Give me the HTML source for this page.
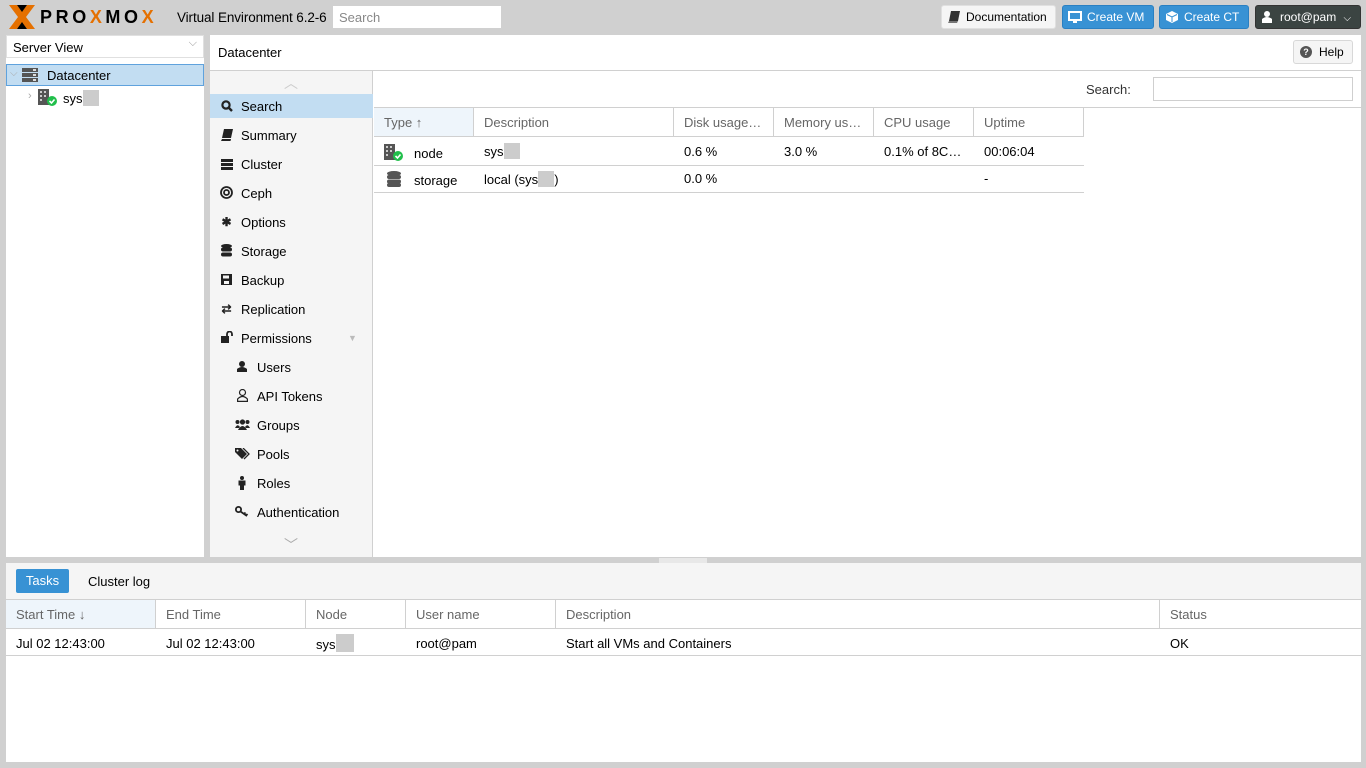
<!DOCTYPE html>
<html><head><meta charset="utf-8"><style>
*{box-sizing:border-box;margin:0;padding:0}
body{width:1366px;height:768px;background:#d0d0d0;font-family:"Liberation Sans",Arial,sans-serif;font-size:13px;color:#000;position:relative;overflow:hidden}
.a{position:absolute}
.btn{position:absolute;top:5px;height:24px;border-radius:3px;line-height:22px;font-size:12px;padding-left:24px}
.nav{position:absolute;left:210px;width:163px;height:24px;line-height:25px}
.nav span{position:absolute;left:31px}
.nav i{position:absolute;left:10px;top:0;font-style:normal;font-size:12px;width:13px;text-align:center;font-weight:bold;color:#222}
.sub span{left:47px}.sub i{left:26px}
.th{position:absolute;top:108px;height:29px;line-height:29px;padding-left:10px;color:#666;border-right:1px solid #d0d0d0;border-bottom:1px solid #d0d0d0;background:#fff}
.td{position:absolute;padding-left:10px;white-space:nowrap}
.blur{display:inline-block;width:16px;height:16px;background:#ccc;vertical-align:-3px}
</style></head><body>
<!-- top bar -->
<svg class="a" style="left:8px;top:4px" width="28" height="26" viewBox="0 0 28 26"><path d="M1 1 L9 1 L27 25 L19 25Z" fill="#e57000"/><path d="M27 1 L19 1 L1 25 L9 25Z" fill="#e57000"/><path d="M9 1 L14 8 L19 1 Z M9 25 L14 18 L19 25Z" fill="#000"/></svg>
<div class="a" style="left:40px;top:7px;font-size:18px;font-weight:bold;letter-spacing:3.6px;line-height:20px;color:#000">PRO<span style="color:#e57000">X</span>MO<span style="color:#e57000">X</span></div>
<div class="a" style="left:177px;top:10px;font-size:13.5px;letter-spacing:-0.1px">Virtual Environment 6.2-6</div>
<div class="a" style="left:333px;top:6px;width:168px;height:22px;background:#fff;color:#888;padding:4px 6px;font-size:13px">Search</div>
<div class="btn" style="left:941px;width:115px;background:#f5f5f5;border:1px solid #e0e0e0"><svg class="a" style="left:6px;top:5px" width="12" height="12"><path d="M3 0 L12 0 L10 10 L1 10Z" fill="#333"/><path d="M1 10 L10 10 L9 12 L0 12Z" fill="#777"/></svg>Documentation</div>
<div class="btn" style="left:1062px;width:92px;background:#3892d4;color:#fff;border:1px solid #2a80c2"><svg class="a" style="left:5px;top:5px" width="14" height="12"><rect x="1" y="1" width="12" height="8" fill="none" stroke="#fff" stroke-width="2"/><rect x="5" y="9" width="4" height="3" fill="#fff"/></svg>Create VM</div>
<div class="btn" style="left:1159px;width:90px;background:#3892d4;color:#fff;border:1px solid #2a80c2"><svg class="a" style="left:6px;top:5px" width="12" height="12"><path d="M6 0 L12 3 L12 9 L6 12 L0 9 L0 3Z" fill="#fff"/><path d="M6 6 L6 11 M1 3.5 L6 6 L11 3.5" stroke="#3892d4" fill="none"/></svg>Create CT</div>
<div class="btn" style="left:1255px;width:106px;background:#3b4442;color:#fff;border:1px solid #333"><svg class="a" style="left:6px;top:5px" width="10" height="12"><circle cx="5" cy="3" r="3" fill="#fff"/><path d="M0 12 L0 8 Q5 4 10 8 L10 12Z" fill="#fff"/></svg>root@pam <span style="font-size:10px;margin-left:4px">⌵</span></div>

<!-- left panel -->
<div class="a" style="left:6px;top:35px;width:198px;height:522px;background:#fff"></div>
<div class="a" style="left:6px;top:35px;width:198px;height:23px;border:1px solid #e0e0e0;padding:4px 6px">Server View<span class="a" style="right:6px;top:1px;color:#999;font-size:11px">⌵</span></div>
<div class="a" style="left:6px;top:64px;width:198px;height:22px;background:#c2ddf2;border:1px solid #5fa2dd"></div>
<div class="a" style="left:10px;top:68px;color:#aaa;font-size:10px">⌵</div>
<svg class="a" style="left:22px;top:68px" width="16" height="14"><rect x="0" y="0" width="16" height="4" fill="#555"/><rect x="0" y="5" width="16" height="4" fill="#555"/><rect x="0" y="10" width="16" height="4" fill="#555"/><rect x="11" y="1" width="3" height="2" fill="#ddd"/><rect x="11" y="6" width="3" height="2" fill="#ddd"/><rect x="11" y="11" width="3" height="2" fill="#ddd"/></svg>
<div class="a" style="left:47px;top:68px">Datacenter</div>
<div class="a" style="left:28px;top:90px;color:#aaa;font-size:11px">›</div>
<svg class="a" style="left:38px;top:89px" width="20" height="18"><rect x="0" y="0" width="11" height="16" fill="#555"/><g fill="#ccc"><rect x="2" y="2" width="2" height="2"/><rect x="6" y="2" width="2" height="2"/><rect x="2" y="6" width="2" height="2"/><rect x="6" y="6" width="2" height="2"/><rect x="2" y="10" width="2" height="2"/></g><circle cx="14" cy="12" r="5" fill="#21bf4b"/><path d="M11.5 12 L13.5 14 L16.5 10.5" stroke="#fff" stroke-width="1.6" fill="none"/></svg>
<div class="a" style="left:63px;top:90px">sys<span class="blur"></span></div>

<!-- main panel -->
<div class="a" style="left:210px;top:35px;width:1151px;height:522px;background:#fff"></div>
<div class="a" style="left:210px;top:70px;width:1151px;height:1px;background:#d0d0d0"></div>
<div class="a" style="left:218px;top:45px">Datacenter</div>
<div class="a" style="left:1293px;top:40px;width:60px;height:24px;background:#f5f5f5;border:1px solid #d8d8d8;border-radius:3px;padding:4px 0 0 25px;font-size:12px">Help<span class="a" style="left:6px;top:5px;width:12px;height:12px;border-radius:6px;background:#555;color:#fff;font-size:9px;line-height:12px;text-align:center;font-weight:bold">?</span></div>
<div class="a" style="left:210px;top:71px;width:163px;height:486px;background:#f5f5f5;border-right:1px solid #d0d0d0"></div>
<div class="a" style="left:284px;top:73px;color:#ccc;font-size:14px">︿</div>
<div class="a" style="left:284px;top:535px;color:#aaa;font-size:14px">﹀</div>
<div class="nav" style="top:94px;background:#c2ddf2"><svg class="a" style="left:11px;top:6px" width="12" height="12"><circle cx="5" cy="5" r="3.6" fill="none" stroke="#222" stroke-width="2.2"/><path d="M7.5 7.5 L11 11" stroke="#222" stroke-width="2.4"/></svg><span>Search</span></div>
<div class="nav" style="top:123px"><svg class="a" style="left:11px;top:6px" width="12" height="12"><path d="M3 0 L12 0 L10 9 L1 9Z" fill="#222"/><path d="M1 10 L10 10 L9.5 12 L0 12Z" fill="#222"/></svg><span>Summary</span></div>
<div class="nav" style="top:152px"><svg class="a" style="left:11px;top:7px" width="12" height="11"><rect y="0" width="12" height="3" fill="#222"/><rect y="4" width="12" height="3" fill="#222"/><rect y="8" width="12" height="3" fill="#222"/></svg><span>Cluster</span></div>
<div class="nav" style="top:181px"><svg class="a" style="left:10px;top:5px" width="13" height="13"><circle cx="6.5" cy="6.5" r="5.5" fill="none" stroke="#222" stroke-width="1.8"/><circle cx="6.5" cy="6.5" r="2.5" fill="none" stroke="#222" stroke-width="1.8"/></svg><span>Ceph</span></div>
<div class="nav" style="top:210px"><i>✱</i><span>Options</span></div>
<div class="nav" style="top:239px"><svg class="a" style="left:11px;top:5px" width="11" height="13"><ellipse cx="5.5" cy="2" rx="5.5" ry="2" fill="#222"/><rect y="3.5" width="11" height="4" rx="2" fill="#222"/><rect y="8.5" width="11" height="4" rx="2" fill="#222"/></svg><span>Storage</span></div>
<div class="nav" style="top:268px"><svg class="a" style="left:11px;top:6px" width="11" height="11"><rect width="11" height="11" fill="#222"/><rect x="2" y="1.5" width="6" height="3" fill="#f5f5f5"/><rect x="3" y="7" width="5" height="3" fill="#f5f5f5"/></svg><span>Backup</span></div>
<div class="nav" style="top:297px"><i>⇄</i><span>Replication</span></div>
<div class="nav" style="top:326px"><svg class="a" style="left:11px;top:5px" width="12" height="12"><rect x="0" y="5" width="8" height="7" fill="#222"/><path d="M6 5 V3 A2.5 2.5 0 0 1 11 3 V5" fill="none" stroke="#222" stroke-width="1.8"/></svg><span>Permissions</span><b class="a" style="left:138px;top:0;color:#bbb;font-size:9px;font-weight:normal">▼</b></div>
<div class="nav sub" style="top:355px"><svg class="a" style="left:27px;top:6px" width="10" height="11"><circle cx="5" cy="3" r="3" fill="#222"/><path d="M0 11 L0 8 Q5 4 10 8 L10 11Z" fill="#222"/></svg><span>Users</span></div>
<div class="nav sub" style="top:384px"><svg class="a" style="left:27px;top:5px" width="11" height="13"><circle cx="5.5" cy="3.5" r="3" fill="none" stroke="#222" stroke-width="1.2"/><path d="M0.6 12.4 V10 Q5.5 5 10.4 10 V12.4Z" fill="none" stroke="#222" stroke-width="1.2"/></svg><span>API Tokens</span></div>
<div class="nav sub" style="top:413px"><svg class="a" style="left:25px;top:6px" width="15" height="11"><circle cx="7.5" cy="3" r="2.6" fill="#222"/><circle cx="2.5" cy="3" r="2" fill="#222"/><circle cx="12.5" cy="3" r="2" fill="#222"/><path d="M3 11 Q7.5 3 12 11Z M0 9 Q2.5 4 5 8 L4 9Z M15 9 Q12.5 4 10 8 L11 9Z" fill="#222"/></svg><span>Groups</span></div>
<div class="nav sub" style="top:442px"><svg class="a" style="left:25px;top:6px" width="15" height="12"><path d="M0 0 L6 0 L12 6 L7 11 L0 4Z" fill="#222"/><path d="M8 0 L14 6 L9 11" fill="none" stroke="#222" stroke-width="1.3"/><circle cx="2.5" cy="2.5" r="1" fill="#f5f5f5"/></svg><span>Pools</span></div>
<div class="nav sub" style="top:471px"><svg class="a" style="left:28px;top:5px" width="8" height="14"><circle cx="4" cy="2" r="2" fill="#222"/><rect x="0.5" y="4.5" width="7" height="5" fill="#222"/><rect x="2" y="9" width="4" height="5" fill="#222"/></svg><span>Roles</span></div>
<div class="nav sub" style="top:500px"><svg class="a" style="left:25px;top:6px" width="14" height="11"><circle cx="3.5" cy="3.5" r="2.6" fill="none" stroke="#222" stroke-width="1.8"/><path d="M5.5 5.5 L12 10 M9 8 L10.5 6.5 M11 9.5 L12.5 8" stroke="#222" stroke-width="1.8"/></svg><span>Authentication</span></div>

<div class="a" style="left:1086px;top:82px;color:#333">Search:</div>
<div class="a" style="left:1153px;top:77px;width:200px;height:24px;border:1px solid #cfcfcf"></div>
<div class="a" style="left:374px;top:107px;width:987px;height:1px;background:#d0d0d0"></div>
<div class="th" style="left:374px;width:100px;background:#eef5fb">Type ↑</div>
<div class="th" style="left:474px;width:200px">Description</div>
<div class="th" style="left:674px;width:100px">Disk usage…</div>
<div class="th" style="left:774px;width:100px">Memory us…</div>
<div class="th" style="left:874px;width:100px">CPU usage</div>
<div class="th" style="left:974px;width:110px">Uptime</div>
<div class="a" style="left:374px;top:165px;width:710px;height:1px;background:#d0d0d0"></div>
<div class="a" style="left:374px;top:192px;width:710px;height:1px;background:#d0d0d0"></div>
<svg class="a" style="left:384px;top:144px" width="20" height="18"><rect x="0" y="0" width="11" height="16" fill="#555"/><g fill="#ccc"><rect x="2" y="2" width="2" height="2"/><rect x="6" y="2" width="2" height="2"/><rect x="2" y="6" width="2" height="2"/><rect x="6" y="6" width="2" height="2"/><rect x="2" y="10" width="2" height="2"/></g><circle cx="14" cy="12" r="5" fill="#21bf4b"/><path d="M11.5 12 L13.5 14 L16.5 10.5" stroke="#fff" stroke-width="1.6" fill="none"/></svg>
<div class="td" style="left:404px;top:146px">node</div>
<div class="td" style="left:474px;top:143px">sys<span class="blur"></span></div>
<div class="td" style="left:674px;top:144px">0.6 %</div>
<div class="td" style="left:774px;top:144px">3.0 %</div>
<div class="td" style="left:874px;top:144px">0.1% of 8C…</div>
<div class="td" style="left:974px;top:144px">00:06:04</div>
<svg class="a" style="left:387px;top:171px" width="14" height="16"><ellipse cx="7" cy="2.5" rx="7" ry="2.5" fill="#555"/><rect x="0" y="4" width="14" height="4" rx="2" fill="#555"/><rect x="0" y="8.5" width="14" height="4" rx="2" fill="#555"/><rect x="0" y="12" width="14" height="4" rx="2" fill="#555"/></svg>
<div class="td" style="left:404px;top:173px">storage</div>
<div class="td" style="left:474px;top:171px">local (sys<span class="blur"></span>)</div>
<div class="td" style="left:674px;top:171px">0.0 %</div>
<div class="td" style="left:974px;top:171px">-</div>

<!-- splitter -->
<div class="a" style="left:659px;top:558px;width:48px;height:5px;background:#e8e8e8"></div>

<!-- bottom panel -->
<div class="a" style="left:6px;top:563px;width:1355px;height:199px;background:#fff"></div>
<div class="a" style="left:6px;top:563px;width:1355px;height:37px;background:#f5f5f5;border-bottom:1px solid #d0d0d0"></div>
<div class="a" style="left:16px;top:569px;width:53px;height:24px;background:#3892d4;color:#fff;border-radius:2px;text-align:center;line-height:24px">Tasks</div>
<div class="a" style="left:88px;top:574px">Cluster log</div>
<div class="th" style="left:6px;top:600px;width:150px;background:#eef5fb">Start Time ↓</div>
<div class="th" style="left:156px;top:600px;width:150px">End Time</div>
<div class="th" style="left:306px;top:600px;width:100px">Node</div>
<div class="th" style="left:406px;top:600px;width:150px">User name</div>
<div class="th" style="left:556px;top:600px;width:604px">Description</div>
<div class="th" style="left:1160px;top:600px;width:201px;border-right:none">Status</div>
<div class="a" style="left:6px;top:655px;width:1355px;height:1px;background:#d0d0d0"></div>
<div class="td" style="left:6px;top:636px">Jul 02 12:43:00</div>
<div class="td" style="left:156px;top:636px">Jul 02 12:43:00</div>
<div class="td" style="left:306px;top:634px">sys<span class="blur" style="width:18px;height:18px"></span></div>
<div class="td" style="left:406px;top:636px">root@pam</div>
<div class="td" style="left:556px;top:636px">Start all VMs and Containers</div>
<div class="td" style="left:1160px;top:636px">OK</div>
</body></html>
